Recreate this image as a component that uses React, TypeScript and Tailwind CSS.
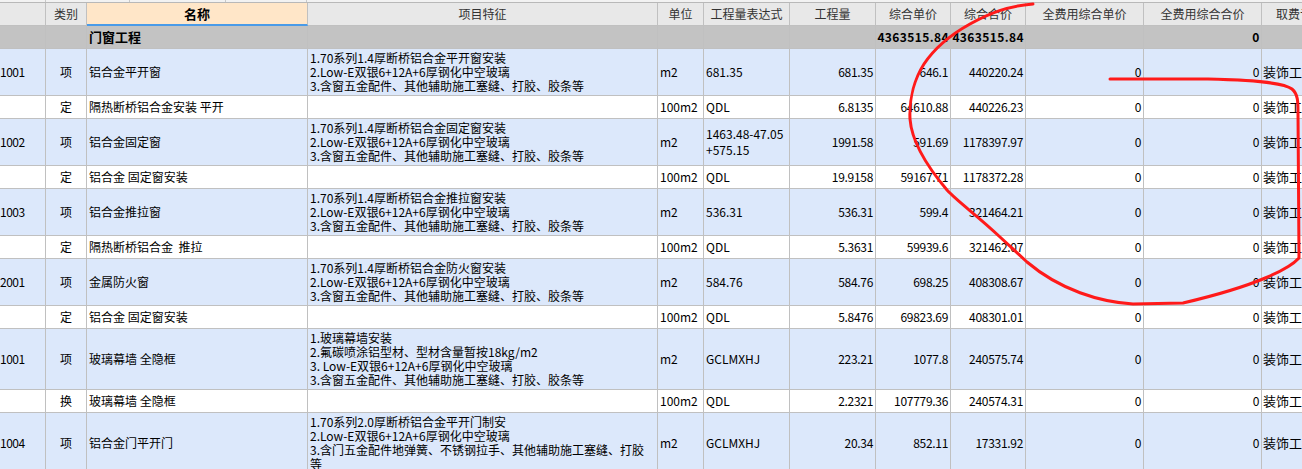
import React from "react";

const W = [
	"w-[46px]",
	"w-[41px]",
	"w-[221px]",
	"w-[350px]",
	"w-[46px]",
	"w-[86px]",
	"w-[86px]",
	"w-[75px]",
	"w-[75px]",
	"w-[118px]",
	"w-[118px]",
	"w-[140px]",
];

type Row = {
	code?: string;
	kind: string;
	name: string;
	feat?: string[];
	unit: string;
	expr: string[];
	qty: string;
	price: string;
	total: string;
	item: boolean;
	h: string;
};

const f1 = (a: string) => [
	`1.70系列1.4厚断桥铝合金${a}`,
	"2.Low-E双银6+12A+6厚钢化中空玻璃",
	"3.含窗五金配件、其他辅助施工塞缝、打胶、胶条等",
];

const rows: Row[] = [
	{ code: "1001", kind: "项", name: "铝合金平开窗", feat: f1("平开窗安装"), unit: "m2", expr: ["681.35"], qty: "681.35", price: "646.1", total: "440220.24", item: true, h: "h-[47px]" },
	{ kind: "定", name: "隔热断桥铝合金安装 平开", unit: "100m2", expr: ["QDL"], qty: "6.8135", price: "64610.88", total: "440226.23", item: false, h: "h-[23px]" },
	{ code: "1002", kind: "项", name: "铝合金固定窗", feat: f1("固定窗安装"), unit: "m2", expr: ["1463.48-47.05", "+575.15"], qty: "1991.58", price: "591.69", total: "1178397.97", item: true, h: "h-[47px]" },
	{ kind: "定", name: "铝合金 固定窗安装", unit: "100m2", expr: ["QDL"], qty: "19.9158", price: "59167.71", total: "1178372.28", item: false, h: "h-[23px]" },
	{ code: "1003", kind: "项", name: "铝合金推拉窗", feat: f1("推拉窗安装"), unit: "m2", expr: ["536.31"], qty: "536.31", price: "599.4", total: "321464.21", item: true, h: "h-[47px]" },
	{ kind: "定", name: "隔热断桥铝合金\u00a0\u00a0推拉", unit: "100m2", expr: ["QDL"], qty: "5.3631", price: "59939.6", total: "321462.07", item: false, h: "h-[23px]" },
	{ code: "2001", kind: "项", name: "金属防火窗", feat: f1("防火窗安装"), unit: "m2", expr: ["584.76"], qty: "584.76", price: "698.25", total: "408308.67", item: true, h: "h-[47px]" },
	{ kind: "定", name: "铝合金 固定窗安装", unit: "100m2", expr: ["QDL"], qty: "5.8476", price: "69823.69", total: "408301.01", item: false, h: "h-[23px]" },
	{
		code: "1001",
		kind: "项",
		name: "玻璃幕墙 全隐框",
		feat: [
			"1.玻璃幕墙安装",
			"2.氟碳喷涂铝型材、型材含量暂按18kg/m2",
			"3.\u00a0Low-E双银6+12A+6厚钢化中空玻璃",
			"3.含窗五金配件、其他辅助施工塞缝、打胶、胶条等",
		],
		unit: "m2",
		expr: ["GCLMXHJ"],
		qty: "223.21",
		price: "1077.8",
		total: "240575.74",
		item: true,
		h: "h-[61px]",
	},
	{ kind: "换", name: "玻璃幕墙 全隐框", unit: "100m2", expr: ["QDL"], qty: "2.2321", price: "107779.36", total: "240574.31", item: false, h: "h-[23px]" },
	{
		code: "1004",
		kind: "项",
		name: "铝合金门平开门",
		feat: [
			"1.70系列2.0厚断桥铝合金平开门制安",
			"2.Low-E双银6+12A+6厚钢化中空玻璃",
			"3.含门五金配件地弹簧、不锈钢拉手、其他辅助施工塞缝、打胶",
			"等",
		],
		unit: "m2",
		expr: ["GCLMXHJ"],
		qty: "20.34",
		price: "852.11",
		total: "17331.92",
		item: true,
		h: "h-[61px]",
	},
];

const cell = "shrink-0 border-r border-b border-[#c0c0c0] flex items-center overflow-hidden whitespace-nowrap";
const num = "justify-end pr-[2px] tracking-[-0.3px]";

function DataRow({ r }: { r: Row }) {
	const bg = r.item ? "bg-[#dce8fb]" : "bg-white";
	return (
		<div className={`flex ${r.h} ${bg}`}>
			<div className={`${W[0]} ${cell} pl-0 tracking-[-0.5px]`}>{r.code}</div>
			<div className={`${W[1]} ${cell} justify-center`}>{r.kind}</div>
			<div className={`${W[2]} ${cell} pl-[2px]`}>{r.name}</div>
			<div className={`${W[3]} ${cell} pl-[2px]`}>
				<div className="leading-[14px]">
					{r.feat?.map((l) => (
						<div key={l}>{l}</div>
					))}
				</div>
			</div>
			<div className={`${W[4]} ${cell} pl-[2px]`}>{r.unit}</div>
			<div className={`${W[5]} ${cell} pl-[2px]`}>
				<div className="leading-[16px]">
					{r.expr.map((l) => (
						<div key={l}>{l}</div>
					))}
				</div>
			</div>
			<div className={`${W[6]} ${cell} ${num}`}>{r.qty}</div>
			<div className={`${W[7]} ${cell} ${num}`}>{r.price}</div>
			<div className={`${W[8]} ${cell} ${num}`}>{r.total}</div>
			<div className={`${W[9]} ${cell} ${num}`}>0</div>
			<div className={`${W[10]} ${cell} ${num}`}>0</div>
			<div className={`${W[11]} ${cell} pl-[1px] text-[13px]`}>装饰工程</div>
		</div>
	);
}

const heads = ["", "类别", "名称", "项目特征", "单位", "工程量表达式", "工程量", "综合单价", "综合合价", "全费用综合单价", "全费用综合合价", "取费专业"];

export default function App() {
	return (
		<div className="relative h-[469px] w-[1302px] overflow-hidden bg-white font-['Noto_Sans_CJK_SC',sans-serif] text-[12px] text-black">
			<div className="flex h-[3px] border-b border-[#b8b8b8] bg-[#f2f2f2]">
				<div className="w-[46px] shrink-0 border-r border-[#c8c8c8]" />
				<div className="w-[84px] shrink-0 border-r border-[#c8c8c8]" />
				<div className="w-[96px] shrink-0 border-r border-[#c8c8c8]" />
				<div className="w-[81px] shrink-0 border-r border-[#c8c8c8]" />
			</div>
			<div className="flex h-[23px] bg-[#e8e8e8] text-[#333]">
				{heads.map((h, i) =>
					i === 2 ? (
						<div
							key={h}
							className={`${W[i]} shrink-0 border-r border-b-2 border-r-[#c0c0c0] border-b-[#4a9be8] bg-[#ffe6c8] flex items-center justify-center font-bold text-[13px] text-black`}
						>
							{h}
						</div>
					) : (
						<div
							key={h + i}
							className={`${W[i]} ${cell} ${i === 11 ? "pl-[14px]" : "justify-center"}`}
						>
							{h}
						</div>
					),
				)}
			</div>
			<div className="flex h-[23px] bg-[#c3c3c3] font-bold">
				<div className={`${W[0]} ${cell}`} />
				<div className={`${W[1]} ${cell}`} />
				<div className={`${W[2]} ${cell} pl-[2px] text-[13px]`}>门窗工程</div>
				<div className={`${W[3]} ${cell}`} />
				<div className={`${W[4]} ${cell}`} />
				<div className={`${W[5]} ${cell}`} />
				<div className={`${W[6]} ${cell}`} />
				<div className={`${W[7]} ${cell} justify-end pr-[1px] tracking-[0.4px]`}>4363515.84</div>
				<div className={`${W[8]} ${cell} justify-end pr-[1px] tracking-[0.4px]`}>4363515.84</div>
				<div className={`${W[9]} ${cell}`} />
				<div className={`${W[10]} ${cell} ${num}`}>0</div>
				<div className={`${W[11]} ${cell}`} />
			</div>
			{rows.map((r, i) => (
				<DataRow key={i} r={r} />
			))}
			<svg className="pointer-events-none absolute inset-0" width="1302" height="469" viewBox="0 0 1302 469">
				<path
					d="M1110 79 L1208 79 C1250 80 1283 82 1292 89 C1298 94 1298 102 1298 112 L1299 258 C1290 268 1260 285 1183 303 L1133 304 C1100 302 1060 290 1027 262 L1000 237 C978 216 958 202 947 190 C930 170 912 145 910 119 C909 98 915 78 924 64 C936 46 952 34 970 24 C990 13 1008 6 1033 4"
					fill="none"
					stroke="#ff1a1a"
					strokeWidth="3"
					strokeLinecap="round"
					strokeLinejoin="round"
				/>
			</svg>
		</div>
	);
}
